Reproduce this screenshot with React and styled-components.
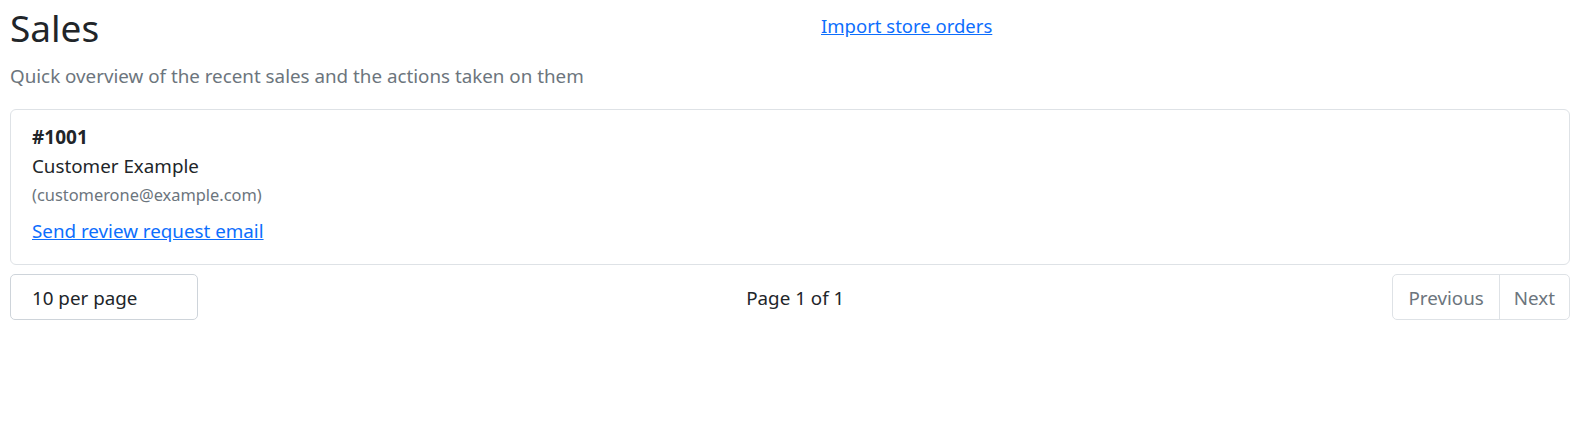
import React from 'react'
import styled, { createGlobalStyle } from 'styled-components'

const GlobalStyle = createGlobalStyle`
  * { box-sizing: border-box; }
  body {
    margin: 0;
    background: #fff;
    color: #212529;
    font-family: 'Noto Sans', 'Open Sans', sans-serif;
    font-size: 18.8px;
    line-height: 1.5;
  }
`

const Page = styled.div`
  padding: 0 8px 0 10px;
`

const Header = styled.div`
  display: grid;
  grid-template-columns: 811px auto;
  align-items: start;
`

const Title = styled.h1`
  margin: 0;
  padding-top: 6px;
  font-size: 37px;
  font-weight: 400;
  line-height: 44px;
`

const HeaderLink = styled.a`
  justify-self: start;
  margin-top: 14px;
  font-size: 18.5px;
  line-height: 24px;
  color: #0d6efd;
  text-decoration: underline;
  cursor: pointer;
`

const Lead = styled.p`
  margin: 12px 0 19px;
  font-size: 18.8px;
  line-height: 28px;
  color: #6c757d;
`

const Card = styled.div`
  border: 1px solid #dee2e6;
  border-radius: 6px;
  padding: 13px 21px 19px;
`

const OrderNo = styled.div`
  font-weight: 700;
  font-size: 19px;
  line-height: 28px;
`

const Customer = styled.div`
  line-height: 31px;
`

const Email = styled.div`
  font-size: 16.4px;
  line-height: 25px;
  color: #6c757d;
`

const ActionLink = styled.a`
  display: block;
  width: fit-content;
  margin-top: 10px;
  line-height: 28px;
  color: #0d6efd;
  text-decoration: underline;
  cursor: pointer;
`

const Footer = styled.div`
  display: flex;
  justify-content: space-between;
  align-items: center;
  margin-top: 9px;
`

const PerPage = styled.div`
  width: 188px;
  height: 46px;
  border: 1px solid #ced4da;
  border-radius: 5px;
  padding: 3px 21px 0;
  display: flex;
  align-items: center;
`

const PageInfo = styled.div`
  padding-top: 3px;
`

const Pager = styled.div`
  display: flex;
  height: 46px;
  border: 1px solid #dee2e6;
  border-radius: 5px;
  overflow: hidden;
`

const PagerButton = styled.span`
  display: flex;
  align-items: center;
  padding: 3px ${p => p.$pad}px 0;
  color: #6c757d;
  & + & { border-left: 1px solid #dee2e6; }
`

export default function App() {
  return (
    <>
      <GlobalStyle />
      <Page>
        <Header>
          <Title>Sales</Title>
          <HeaderLink>Import store orders</HeaderLink>
        </Header>
        <Lead>Quick overview of the recent sales and the actions taken on them</Lead>
        <Card>
          <OrderNo>#1001</OrderNo>
          <Customer>Customer Example</Customer>
          <Email>(customerone@example.com)</Email>
          <ActionLink>Send review request email</ActionLink>
        </Card>
        <Footer>
          <PerPage>10 per page</PerPage>
          <PageInfo>Page 1 of 1</PageInfo>
          <Pager>
            <PagerButton $pad={15}>Previous</PagerButton>
            <PagerButton $pad={14}>Next</PagerButton>
          </Pager>
        </Footer>
      </Page>
    </>
  )
}
